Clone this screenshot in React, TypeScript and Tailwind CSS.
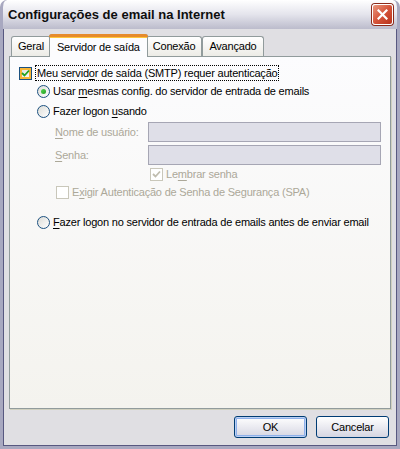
// Windows XP (Luna Silver) "Configurações de email na Internet" dialog,
// Servidor de saída tab.

import type { ReactNode } from 'react';

const font = { fontFamily: '"Liberation Sans", Arial, sans-serif' };

function U({ children }: { children: ReactNode }) {
  return <span className="underline underline-offset-[2px]">{children}</span>;
}

function Checkbox({ checked, disabled, hot }: { checked?: boolean; disabled?: boolean; hot?: boolean }) {
  return (
    <span
      className={`relative flex h-[13px] w-[13px] shrink-0 items-center justify-center border ${
        disabled ? 'border-[#c9c7ba] bg-white' : 'border-[#1c5180] bg-gradient-to-br from-[#dcdcd7] to-white'
      }`}
    >
      {hot && !disabled && <span className="absolute inset-0 border-2 border-[#f8b636]" />}
      {checked && (
        <svg width="9" height="9" viewBox="0 0 9 9" className="relative">
          <path
            d="M1 4 L3.5 6.5 L8 1.5"
            fill="none"
            stroke={disabled ? '#c0bdaf' : '#21a121'}
            strokeWidth="1.8"
          />
        </svg>
      )}
    </span>
  );
}

function Radio({ checked }: { checked?: boolean }) {
  return (
    <span className="flex h-[13px] w-[13px] shrink-0 items-center justify-center rounded-full border border-[#1c5180] bg-gradient-to-br from-[#dcdcd7] to-white">
      {checked && (
        <span className="h-[5px] w-[5px] rounded-full bg-gradient-to-br from-[#55d551] to-[#21a121]" />
      )}
    </span>
  );
}

function Tab({ children, active }: { children: ReactNode; active?: boolean }) {
  if (active) {
    return (
      <div className="relative z-10 -mx-[2px] -mb-px flex h-[23px] items-center rounded-t-[3px] border border-b-0 border-[#919b9c] bg-[#fcfcfe] px-[7px] pt-[2px]">
        <span className="absolute -left-px -right-px -top-px h-[3px] rounded-t-[3px] bg-[#e68b2c]" />
        <span className="absolute left-0 right-0 top-[2px] h-px bg-[#ffc73c]" />
        {children}
      </div>
    );
  }
  return (
    <div className="flex h-[20px] items-center rounded-t-[3px] border border-b-0 border-[#919b9c] bg-gradient-to-b from-white to-[#ecebe6] px-[6px]">
      {children}
    </div>
  );
}

function XpButton({ children, isDefault }: { children: ReactNode; isDefault?: boolean }) {
  return (
    <button
      className={`flex h-[22px] w-[73px] items-center justify-center rounded-[3px] border border-[#003c74] bg-gradient-to-b from-white to-[#d6d6e2] text-[11px] text-black ${
        isDefault ? 'shadow-[inset_0_0_0_1px_#bbd0f3,inset_0_0_0_2px_#8eb0ea]' : ''
      }`}
    >
      {children}
    </button>
  );
}

export default function App() {
  return (
    <div
      className="flex h-[449px] w-[400px] flex-col overflow-hidden rounded-t-[7px] border-x-[3px] border-b-[3px] border-[#a8a8c0] bg-[#e0dfe3] text-[11px] leading-[13px] text-black shadow-[inset_0_0_0_1px_#585880]"
      style={font}
    >
      {/* title bar */}
      <div className="flex h-[29px] shrink-0 items-center justify-between bg-gradient-to-b from-white via-[#e4e4ec] to-[#bcbccc] pl-[5px] pr-[4px]">
        <span className="text-[13px] font-bold text-[#0e0e0e]">Configurações de email na Internet</span>
        <span className="flex h-[21px] w-[21px] items-center justify-center rounded-[3px] border border-white bg-gradient-to-br from-[#e8977f] via-[#d5543a] to-[#b8321b] shadow-[0_0_0_1px_#8c2a1a]">
          <svg width="11" height="11" viewBox="0 0 11 11">
            <path d="M1.5 1.5 L9.5 9.5 M9.5 1.5 L1.5 9.5" stroke="white" strokeWidth="2.2" strokeLinecap="square" />
          </svg>
        </span>
      </div>

      <div className="flex flex-1 flex-col px-[6px] pb-[6px] pt-[3px] tracking-[-0.2px]">
        {/* tabs */}
        <div className="flex items-end pl-[2px] pt-[2px]">
          <Tab>Geral</Tab>
          <Tab active>Servidor de saída</Tab>
          <Tab>Conexão</Tab>
          <Tab>Avançado</Tab>
        </div>

        {/* panel */}
        <div className="flex h-[353px] flex-col border border-[#919b9c] bg-gradient-to-b from-[#fcfcfe] to-[#f4f3ee] pl-[9px] pr-[9px] pt-[8px] shadow-[1px_1px_0_#d0d0bf]">
          <div className="flex items-center gap-[3px]">
            <Checkbox checked hot />
            <span className="whitespace-nowrap border border-dotted border-black px-px py-px leading-[12px]">
              Meu servid<U>o</U>r de saída (SMTP) requer autenticação
            </span>
          </div>

          <div className="ml-[18px] mt-[4px] flex items-center gap-[3px]">
            <Radio checked />
            <span className="whitespace-nowrap">
              Usar <U>m</U>esmas config. do servidor de entrada de emails
            </span>
          </div>

          <div className="ml-[18px] mt-[7px] flex items-center gap-[3px]">
            <Radio />
            <span className="whitespace-nowrap">
              Fazer logon <U>u</U>sando
            </span>
          </div>

          <div className="ml-[36px] mt-[4px] flex flex-col text-[#aca899]">
            <div className="flex items-center">
              <span className="w-[93px] whitespace-nowrap">
                <U>N</U>ome de usuário:
              </span>
              <span className="h-[20px] flex-1 border border-[#a6a6b4] bg-[#dfdfe8]" />
            </div>
            <div className="mt-[3px] flex items-center">
              <span className="w-[93px]">
                <U>S</U>enha:
              </span>
              <span className="h-[20px] flex-1 border border-[#a6a6b4] bg-[#dfdfe8]" />
            </div>
            <div className="ml-[95px] mt-[3px] flex items-center gap-[3px]">
              <Checkbox checked disabled />
              <span className="whitespace-nowrap">
                Le<U>m</U>brar senha
              </span>
            </div>
            <div className="ml-px mt-[5px] flex items-center gap-[3px]">
              <Checkbox disabled />
              <span className="whitespace-nowrap">
                E<U>x</U>igir Autenticação de Senha de Segurança (SPA)
              </span>
            </div>
          </div>

          <div className="ml-[18px] mt-[17px] flex items-center gap-[3px]">
            <Radio />
            <span className="whitespace-nowrap">
              <U>F</U>azer logon no servidor de entrada de emails antes de enviar email
            </span>
          </div>
        </div>

        {/* buttons */}
        <div className="mt-auto flex justify-end gap-[9px] pb-[2px] pr-[2px]">
          <XpButton isDefault>OK</XpButton>
          <XpButton>Cancelar</XpButton>
        </div>
      </div>
    </div>
  );
}
